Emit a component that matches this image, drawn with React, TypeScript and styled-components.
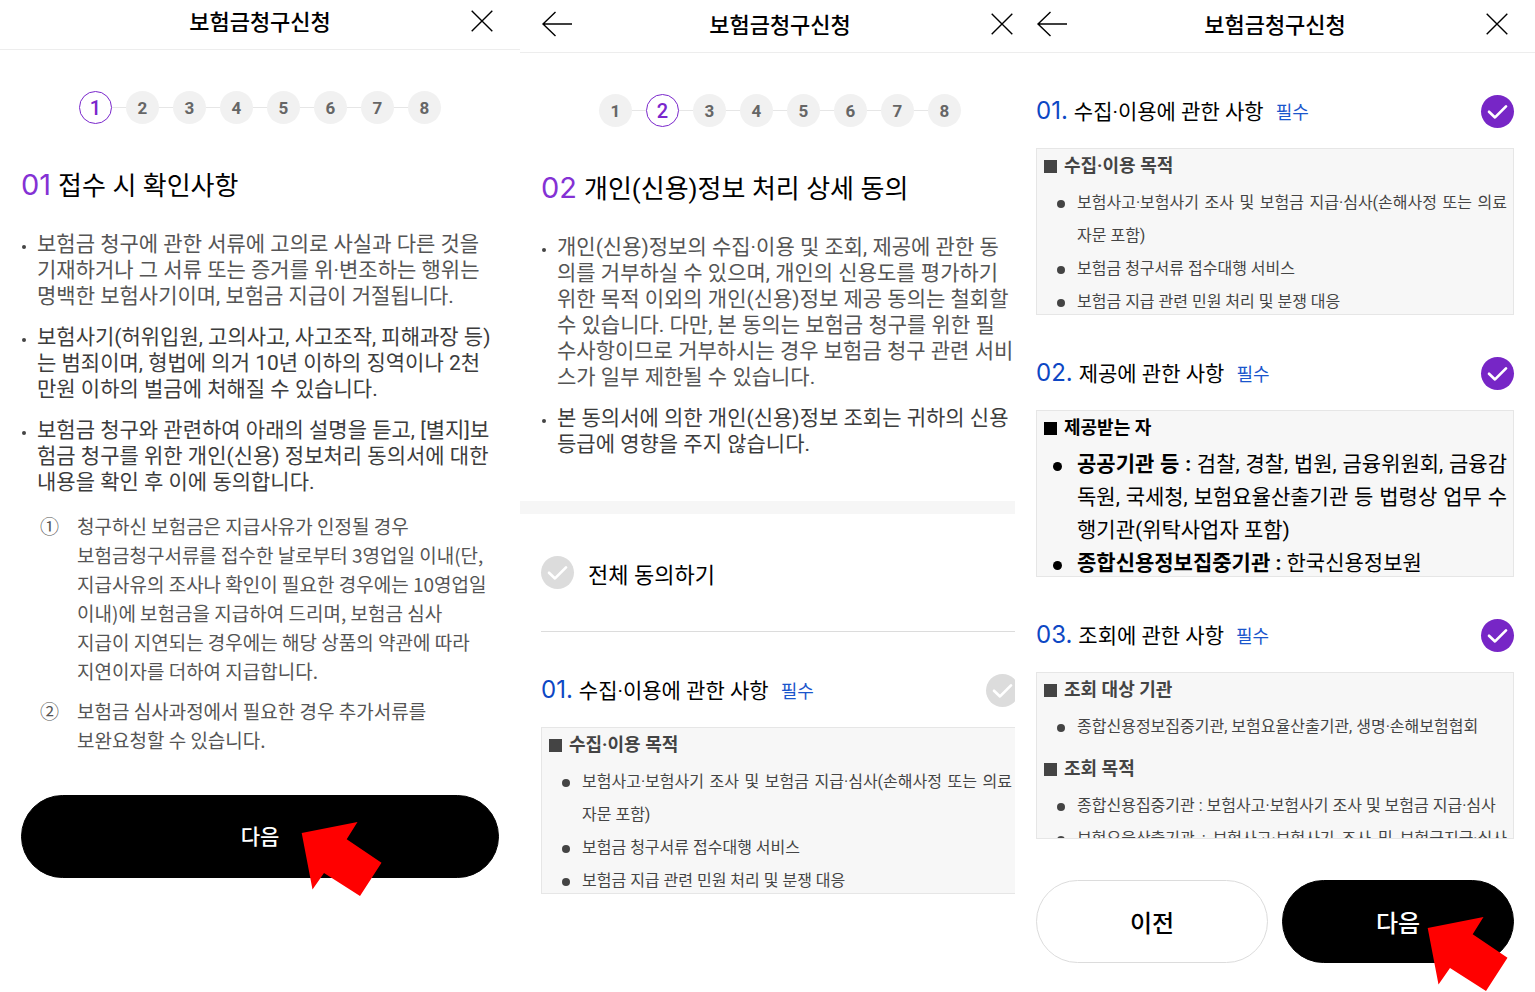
import React from "react";
import styled, { createGlobalStyle, css } from "styled-components";

const mixed = `Roboto, "Noto Sans CJK KR", sans-serif`;
const korean = `"Noto Sans CJK KR", sans-serif`;
const numeric = `Inter, "Noto Sans CJK KR", sans-serif`;

const GlobalStyle = createGlobalStyle`
  *, *::before, *::after { box-sizing: border-box; }
  body { margin: 0; background: #fff; color: #000; font-family: ${mixed}; }
  h1, h2, h3, h4, p, ul, ol { margin: 0; padding: 0; font-weight: 400; }
  ul, ol { list-style: none; }
  button { font: inherit; color: inherit; cursor: pointer; }
`;

const Board = styled.main`
  display: grid;
  grid-template-columns: 520fr 495fr 520fr;
  align-items: start;
  min-height: 100vh;
  overflow: hidden;
`;

const Pane = styled.div`
  min-width: 0;
  overflow: hidden;
`;

const Screen = styled.section<{ $raised?: boolean; $bleed?: boolean }>`
  display: flex;
  flex-direction: column;
  padding-bottom: 28px;
  ${(p) => p.$raised && "margin-top: -3px;"}
  ${(p) => p.$bleed && "width: calc(100% + 25px);"}
`;

const Header = styled.header`
  display: grid;
  grid-template-columns: 32px 1fr 32px;
  align-items: center;
  height: 53px;
  padding: 0 21px 4px;
  border-bottom: 1px solid #ededed;
`;

const Title = styled.h1`
  grid-column: 2;
  padding-top: 4px;
  font-size: 22px;
  font-weight: 500;
  line-height: 32px;
  text-align: center;
`;

const IconButton = styled.button<{ $end?: boolean }>`
  display: flex;
  justify-content: ${(p) => (p.$end ? "flex-end" : "flex-start")};
  width: 32px;
  padding: 0;
  border: 0;
  background: none;
  ${(p) => p.$end && "grid-column: 3; padding-right: 6px;"}
`;

const Steps = styled.ol`
  display: flex;
  justify-content: center;
  align-items: center;
  margin-top: 41px;
`;

const Step = styled.li<{ $active: boolean }>`
  display: flex;
  align-items: center;

  &:not(:first-child)::before {
    content: "";
    width: 14px;
    height: 1px;
    background: #e6e6e6;
  }

  span {
    display: grid;
    place-items: center;
    width: 33px;
    height: 33px;
    border-radius: 50%;
    background: #f1f1f1;
    color: #666;
    font: 700 17px/20px ${mixed};
    ${(p) =>
      p.$active &&
      css`
        border: 1px solid #7a27cc;
        background: #fff;
        color: #7a27cc;
        font-size: 20px;
        font-weight: 500;
      `}
  }
`;

const Body = styled.div`
  display: flex;
  flex-direction: column;
  padding: 0 21px;
`;

const Heading = styled.h2`
  display: flex;
  align-items: baseline;
  gap: 7px;
  margin-top: 41px;
  font-size: 26px;
  line-height: 40px;
  white-space: nowrap;

  span {
    color: #8431d4;
    font: 400 29px/40px ${numeric};
  }
`;

const Notes = styled.ul`
  display: flex;
  flex-direction: column;
  gap: 15px;
  margin-top: 25px;
`;

const Note = styled.li<{ $soft?: boolean }>`
  display: grid;
  grid-template-columns: 16px 1fr;
  color: ${(p) => (p.$soft ? "#555" : "#3c3c3c")};
  font-size: 21px;
  line-height: 26px;
  white-space: pre-line;

  &::before {
    content: "";
    width: 4px;
    height: 4px;
    margin: 14px 0 0 1px;
    border-radius: 50%;
    background: #444;
  }
`;

const Clauses = styled.ol`
  display: flex;
  flex-direction: column;
  gap: 11px;
  margin-top: 16px;
  padding-left: 19px;
`;

const Clause = styled.li`
  display: grid;
  grid-template-columns: 37px 1fr;
  color: #555;
  font: 400 19px/29px ${korean};
  white-space: pre-line;
`;

const Actions = styled.div`
  display: flex;
  gap: 14px;
  margin-top: 41px;
`;

const ActionSlot = styled.div`
  position: relative;
  flex: 1;
  display: flex;
`;

const PillButton = styled.button<{ $outline?: boolean; $large?: boolean }>`
  flex: 1;
  height: 83px;
  padding: 0 0 ${(p) => (p.$large ? 0 : 4)}px;
  border: 1px solid ${(p) => (p.$outline ? "#dcdcdc" : "#000")};
  border-radius: 42px;
  background: ${(p) => (p.$outline ? "#fff" : "#000")};
  color: ${(p) => (p.$outline ? "#000" : "#fff")};
  font-size: ${(p) => (p.$large ? 24 : 21)}px;
  font-weight: 500;
`;

const PointerSvg = styled.svg<{ $low?: boolean }>`
  position: absolute;
  top: ${(p) => (p.$low ? 37 : 27)}px;
  left: calc(50% + ${(p) => (p.$low ? 29 : 41)}px);
  pointer-events: none;
`;

const Band = styled.div`
  height: 13px;
  margin-top: 44px;
  background: #f6f6f6;
`;

const AgreeAll = styled.label`
  display: flex;
  align-items: center;
  gap: 14px;
  height: 118px;
  border-bottom: 1px solid #dcdcdc;
  font-size: 22px;
`;

const CheckShell = styled.span`
  display: grid;
  flex: none;

  input,
  svg {
    grid-area: 1 / 1;
  }

  input {
    appearance: none;
    width: 33px;
    height: 33px;
    margin: 0;
    border-radius: 50%;
    background: #dcdcdc;
  }

  input:checked {
    background: #7726c6;
  }

  svg {
    pointer-events: none;
  }
`;

const Term = styled.article`
  padding-top: 42px;
`;

const TermHead = styled.label`
  display: flex;
  align-items: center;
  justify-content: space-between;
  height: 33px;
`;

const TermTitle = styled.span`
  display: flex;
  align-items: baseline;
  font-size: 21px;
  line-height: 33px;
  white-space: nowrap;
`;

const TermNumber = styled.span`
  margin-right: 6px;
  color: #0d47c4;
  font: 400 24px/33px ${numeric};
`;

const Required = styled.span`
  margin-left: 12px;
  color: #1a56cc;
  font-size: 18px;
`;

const TermBox = styled.div<{ $strong?: boolean }>`
  height: 167px;
  margin-top: 20px;
  padding: 0 6px 0 7px;
  border: 1px solid #e6e6e6;
  background: #f7f7f7;
  color: ${(p) => (p.$strong ? "#000" : "#444")};
  overflow: hidden;
`;

const BoxHeading = styled.h3`
  display: flex;
  align-items: center;
  gap: 7px;
  font: 700 18px/34px ${mixed};

  &::before {
    content: "";
    width: 13px;
    height: 13px;
    background: currentColor;
  }
`;

const BoxList = styled.ul`
  padding: 3px 0 9px;
`;

const BoxItem = styled.li<{ $strong?: boolean; $fill?: boolean }>`
  display: grid;
  grid-template-columns: 33px 1fr;
  font-size: ${(p) => (p.$strong ? 21 : 16)}px;
  line-height: 33px;
  text-align: justify;
  ${(p) => p.$fill && "text-align-last: justify;"}

  &::before {
    content: "";
    width: ${(p) => (p.$strong ? 9 : 8)}px;
    height: ${(p) => (p.$strong ? 9 : 8)}px;
    margin: 14px 0 0 ${(p) => (p.$strong ? 9 : 13)}px;
    border-radius: 50%;
    background: currentColor;
  }
`;

const BackIcon = () => (
  <svg width="32" height="26" viewBox="0 0 32 26" fill="none" stroke="#000" strokeWidth="1.4" aria-hidden="true">
    <path d="M14.5 1 2 13 14.5 25M2 13H31" />
  </svg>
);

const CloseIcon = () => (
  <svg width="22" height="22" viewBox="0 0 22 22" fill="none" stroke="#000" strokeWidth="1.4" aria-hidden="true">
    <path d="M.7.7 21.3 21.3M21.3.7.7 21.3" />
  </svg>
);

const Pointer = ({ low }: { low?: boolean }) => (
  <PointerSvg $low={low} width="82" height="74" viewBox="0 0 82 74" aria-hidden="true">
    <path fill="#f00" d="M.7 11 56.5 0 45.7 17.3 80.5 40.8 59 74 23 51 11.5 67.5Z" />
  </PointerSvg>
);

const Check = ({ on }: { on?: boolean }) => (
  <CheckShell>
    <input type="checkbox" defaultChecked={on} />
    <svg width="33" height="33" viewBox="0 0 33 33" fill="none" stroke="#fff" strokeWidth="2.7" strokeLinecap="round" strokeLinejoin="round" aria-hidden="true">
      <path d="M8 16.8 14 22.4 25 11.4" />
    </svg>
  </CheckShell>
);

const TopBar = ({ back }: { back?: boolean }) => (
  <Header>
    {back && (
      <IconButton type="button" aria-label="뒤로">
        <BackIcon />
      </IconButton>
    )}
    <Title>보험금청구신청</Title>
    <IconButton type="button" $end aria-label="닫기">
      <CloseIcon />
    </IconButton>
  </Header>
);

const Stepper = ({ current }: { current: number }) => (
  <Steps>
    {[1, 2, 3, 4, 5, 6, 7, 8].map((n) => (
      <Step key={n} $active={n === current} aria-current={n === current ? "step" : undefined}>
        <span>{n}</span>
      </Step>
    ))}
  </Steps>
);

type AgreementProps = {
  number: string;
  title: string;
  on?: boolean;
  strong?: boolean;
  children: React.ReactNode;
};

const Agreement = ({ number, title, on, strong, children }: AgreementProps) => (
  <Term>
    <TermHead>
      <TermTitle>
        <TermNumber>{number}</TermNumber>
        {title}
        <Required>필수</Required>
      </TermTitle>
      <Check on={on} />
    </TermHead>
    <TermBox $strong={strong}>{children}</TermBox>
  </Term>
);

const UsePurpose = () => (
  <>
    <BoxHeading>수집·이용 목적</BoxHeading>
    <BoxList>
      <BoxItem>보험사고·보험사기 조사 및 보험금 지급·심사(손해사정 또는 의료 자문 포함)</BoxItem>
      <BoxItem>보험금 청구서류 접수대행 서비스</BoxItem>
      <BoxItem>보험금 지급 관련 민원 처리 및 분쟁 대응</BoxItem>
    </BoxList>
  </>
);

const receiptNotes = [
  "보험금 청구에 관한 서류에 고의로 사실과 다른 것을\n기재하거나 그 서류 또는 증거를 위·변조하는 행위는\n명백한 보험사기이며, 보험금 지급이 거절됩니다.",
  "보험사기(허위입원, 고의사고, 사고조작, 피해과장 등)\n는 범죄이며, 형법에 의거 10년 이하의 징역이나 2천\n만원 이하의 벌금에 처해질 수 있습니다.",
  "보험금 청구와 관련하여 아래의 설명을 듣고, [별지]보\n험금 청구를 위한 개인(신용) 정보처리 동의서에 대한\n내용을 확인 후 이에 동의합니다.",
];

const consentNotes = [
  "개인(신용)정보의 수집·이용 및 조회, 제공에 관한 동\n의를 거부하실 수 있으며, 개인의 신용도를 평가하기\n위한 목적 이외의 개인(신용)정보 제공 동의는 철회할\n수 있습니다. 다만, 본 동의는 보험금 청구를 위한 필\n수사항이므로 거부하시는 경우 보험금 청구 관련 서비\n스가 일부 제한될 수 있습니다.",
  "본 동의서에 의한 개인(신용)정보 조회는 귀하의 신용\n등급에 영향을 주지 않습니다.",
];

const clauses = [
  ["①", "청구하신 보험금은 지급사유가 인정될 경우\n보험금청구서류를 접수한 날로부터 3영업일 이내(단,\n지급사유의 조사나 확인이 필요한 경우에는 10영업일\n이내)에 보험금을 지급하여 드리며, 보험금 심사\n지급이 지연되는 경우에는 해당 상품의 약관에 따라\n지연이자를 더하여 지급합니다."],
  ["②", "보험금 심사과정에서 필요한 경우 추가서류를\n보완요청할 수 있습니다."],
];

const NoteList = ({ items }: { items: string[] }) => (
  <Notes>
    {items.map((text, i) => (
      <Note key={text} $soft={i === 0}>
        <p>{text}</p>
      </Note>
    ))}
  </Notes>
);

export default function App() {
  return (
    <>
      <GlobalStyle />
      <Board>
        <Pane>
          <Screen $raised>
            <TopBar />
            <Stepper current={1} />
            <Body>
              <Heading>
                <span>01</span>접수 시 확인사항
              </Heading>
              <NoteList items={receiptNotes} />
              <Clauses>
                {clauses.map(([mark, text]) => (
                  <Clause key={mark}>
                    <span>{mark}</span>
                    <p>{text}</p>
                  </Clause>
                ))}
              </Clauses>
              <Actions>
                <ActionSlot>
                  <PillButton type="button">다음</PillButton>
                  <Pointer />
                </ActionSlot>
              </Actions>
            </Body>
          </Screen>
        </Pane>

        <Pane>
          <Screen $bleed>
            <TopBar back />
            <Stepper current={2} />
            <Body>
              <Heading>
                <span>02</span>개인(신용)정보 처리 상세 동의
              </Heading>
              <NoteList items={consentNotes} />
            </Body>
            <Band />
            <Body>
              <AgreeAll>
                <Check />
                전체 동의하기
              </AgreeAll>
              <Agreement number="01." title="수집·이용에 관한 사항">
                <UsePurpose />
              </Agreement>
            </Body>
          </Screen>
        </Pane>

        <Pane>
          <Screen>
            <TopBar back />
            <Body>
              <Agreement number="01." title="수집·이용에 관한 사항" on>
                <UsePurpose />
              </Agreement>
              <Agreement number="02." title="제공에 관한 사항" on strong>
                <BoxHeading>제공받는 자</BoxHeading>
                <BoxList>
                  <BoxItem $strong>
                    <p>
                      <b>공공기관 등 :</b> 검찰, 경찰, 법원, 금융위원회, 금융감독원, 국세청, 보험요율산출기관 등 법령상 업무 수행기관(위탁사업자 포함)
                    </p>
                  </BoxItem>
                  <BoxItem $strong>
                    <p>
                      <b>종합신용정보집중기관 :</b> 한국신용정보원
                    </p>
                  </BoxItem>
                </BoxList>
              </Agreement>
              <Agreement number="03." title="조회에 관한 사항" on>
                <BoxHeading>조회 대상 기관</BoxHeading>
                <BoxList>
                  <BoxItem>종합신용정보집중기관, 보험요율산출기관, 생명·손해보험협회</BoxItem>
                </BoxList>
                <BoxHeading>조회 목적</BoxHeading>
                <BoxList>
                  <BoxItem>종합신용집중기관 : 보험사고·보험사기 조사 및 보험금 지급·심사</BoxItem>
                  <BoxItem $fill>보험요율산출기관 : 보험사고·보험사기 조사 및 보험금지급·심사</BoxItem>
                </BoxList>
              </Agreement>
              <Actions>
                <ActionSlot>
                  <PillButton type="button" $outline $large>
                    이전
                  </PillButton>
                </ActionSlot>
                <ActionSlot>
                  <PillButton type="button" $large>
                    다음
                  </PillButton>
                  <Pointer low />
                </ActionSlot>
              </Actions>
            </Body>
          </Screen>
        </Pane>
      </Board>
    </>
  );
}
